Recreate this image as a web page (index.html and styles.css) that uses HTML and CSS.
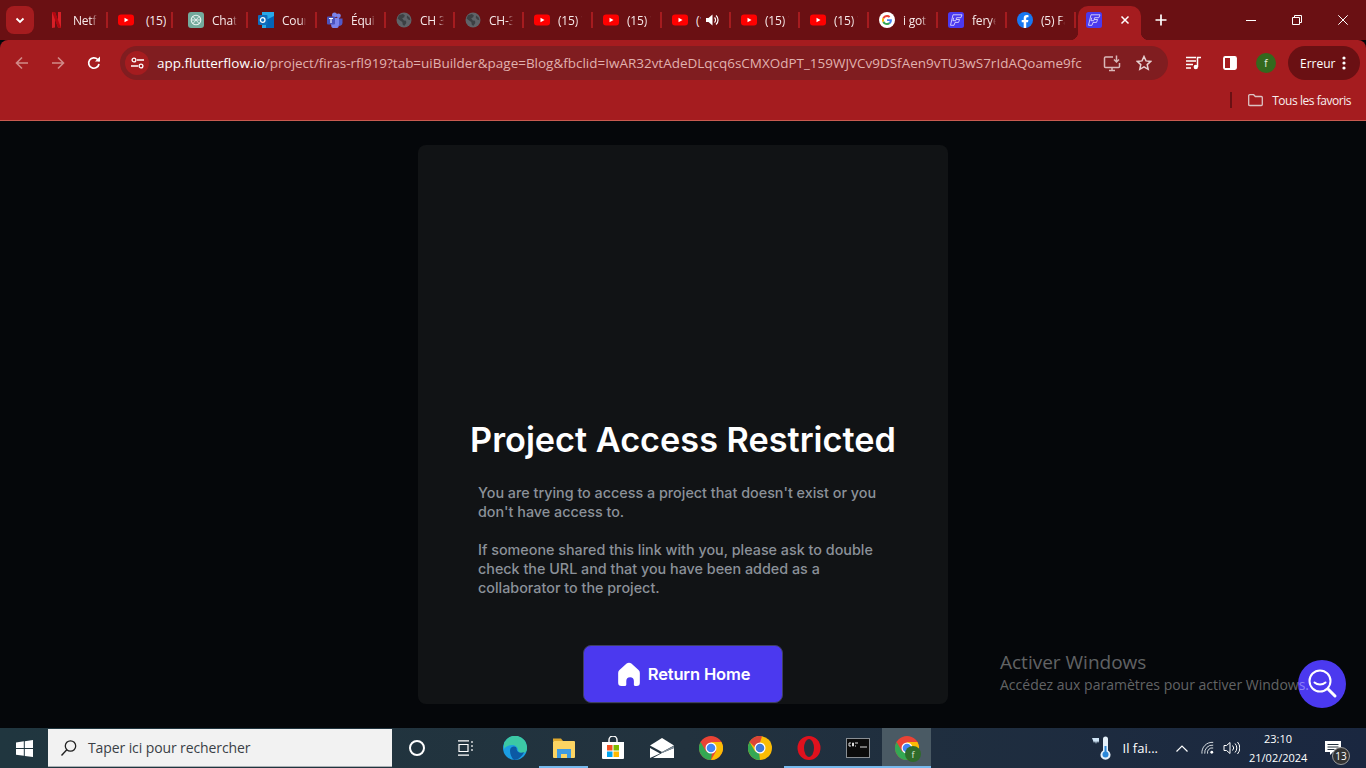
FILE: index.html
```html
<!DOCTYPE html>
<html lang="fr">
<head>
<meta charset="utf-8">
<title>FlutterFlow</title>
<link rel="stylesheet" href="styles.css">
</head>
<body>
<svg class="sprite" xmlns="http://www.w3.org/2000/svg">
  <symbol id="yt" viewBox="0 0 16 16"><rect x="0" y="2.500" width="16" height="11" rx="3" fill="#f00"/><path d="M6.500 5.700v4.600L10.500 8z" fill="#fff"/></symbol>
  <symbol id="globe" viewBox="0 0 16 16"><circle cx="8" cy="8" r="7.500" fill="#5f6368"/><path d="M3 3.200 6.800 2l2 1.200-.6 2-2 1 1.600 2.200 2.200.3.300 2.200-1.800 2.800-1.600-.6-.6-3.200L3.400 8 1.600 6.600zM11 3.400l2.600 2.200.8 2.600-2.200-.6-1.400-1.800z" fill="#3c4043"/></symbol>
  <symbol id="ff" viewBox="0 0 16 16"><rect width="16" height="16" rx="2.500" fill="#4b39ef"/><path d="M5 2.800h9l-1.100 2.900H8.600l-.6 1.800h3.600l-1.100 2.900H7l-1 2.900H2.500zM5.800 5.700l-.9 3h3.300" fill="none" stroke="#d9d5ff" stroke-width=".9"/></symbol>
</svg>

<header class="tabstrip">
  <button class="tabsearch"><svg width="12" height="12" viewBox="0 0 12 12"><path d="M2.500 4.500 6 8l3.500-3.500" fill="none" stroke="#fff" stroke-width="1.800"/></svg></button>
  <div class="tabs">
    <div class="tab"><svg class="fav" viewBox="0 0 16 16"><path d="M3 0h3l3 9V0h3v16l-3-.4L6 7v8.600l-3 .4z" fill="#d81f26"/><path d="M3 0h3l6 16-3-.4z" fill="#b20710"/></svg><span class="tab-t">Netflix</span></div>
    <div class="tab tab-wide"><svg class="fav"><use href="#yt"/></svg><span class="tab-t tab-t-far">(15) YouTube</span></div>
    <div class="tab tab-wide"><svg class="fav" viewBox="0 0 16 16"><rect width="16" height="16" rx="3" fill="#74aa9c"/><circle cx="8" cy="8" r="4.800" fill="none" stroke="#e8f3f0" stroke-width="1.100"/><path d="M5 4.500 11 11.500M11 4.500 5 11.500M3.500 8h9" stroke="#e8f3f0" stroke-width=".9"/></svg><span class="tab-t">ChatGPT</span></div>
    <div class="tab"><svg class="fav" viewBox="0 0 16 16"><rect x="4" y="0" width="12" height="16" fill="#28a8ea"/><path d="M8 8l8-4v12H8z" fill="#0364b8"/><rect x="0" y="3" width="9.500" height="10" rx="1" fill="#0f6cbd"/><circle cx="4.700" cy="8" r="2.300" fill="none" stroke="#fff" stroke-width="1.300"/></svg><span class="tab-t">Courrier</span></div>
    <div class="tab"><svg class="fav" viewBox="0 0 16 16"><circle cx="11.500" cy="3.800" r="2.300" fill="#7b83eb"/><circle cx="7.500" cy="3" r="2.500" fill="#7b83eb"/><path d="M10 6.500h5.500V11a3 3 0 0 1-5.500 1.500z" fill="#5059c9"/><path d="M4 6h8v6.500a4 4 0 0 1-8 0z" fill="#7b83eb"/><rect x="0" y="4.500" width="8" height="8" rx="1" fill="#4b53bc"/><path d="M2 6.500h4M4 6.500v4.500" stroke="#fff" stroke-width="1.100"/></svg><span class="tab-t">Équipes</span></div>
    <div class="tab"><svg class="fav"><use href="#globe"/></svg><span class="tab-t">CH 3</span></div>
    <div class="tab"><svg class="fav"><use href="#globe"/></svg><span class="tab-t">CH-3</span></div>
    <div class="tab"><svg class="fav"><use href="#yt"/></svg><span class="tab-t">(15) YouTube</span></div>
    <div class="tab"><svg class="fav"><use href="#yt"/></svg><span class="tab-t">(15) YouTube</span></div>
    <div class="tab tab-audio"><svg class="fav"><use href="#yt"/></svg><span class="tab-t tab-t-short">(15)</span><svg class="tab-sound" viewBox="0 0 14 14"><path d="M1 5h2.500L7.500 1.500v11L3.500 9H1z" fill="#fff"/><path d="M9.500 4.500a3.500 3.500 0 0 1 0 5M11 2.500a6 6 0 0 1 0 9" fill="none" stroke="#fff" stroke-width="1.200"/></svg></div>
    <div class="tab"><svg class="fav"><use href="#yt"/></svg><span class="tab-t">(15) YouTube</span></div>
    <div class="tab"><svg class="fav"><use href="#yt"/></svg><span class="tab-t">(15) YouTube</span></div>
    <div class="tab"><svg class="fav" viewBox="0 0 16 16"><circle cx="8" cy="8" r="8" fill="#fff"/><path d="M12.900 8.200c0-.4 0-.7-.1-1H8v1.900h2.800c-.1.600-.5 1.200-1 1.500l1.500 1.200c.9-.8 1.600-2.100 1.600-3.600z" fill="#4285f4"/><path d="M8 13c1.300 0 2.400-.4 3.300-1.200l-1.500-1.200c-.5.300-1.100.5-1.800.5-1.400 0-2.500-.9-2.900-2.100L3.500 10.200C4.300 11.900 6 13 8 13z" fill="#34a853"/><path d="M5.100 9c-.2-.6-.2-1.400 0-2L3.500 5.800c-.7 1.400-.7 3 0 4.400z" fill="#fbbc05"/><path d="M8 5c.7 0 1.400.3 1.900.8l1.400-1.400C10.400 3.500 9.300 3 8 3 6 3 4.300 4.100 3.500 5.800L5.100 7C5.500 5.900 6.600 5 8 5z" fill="#ea4335"/></svg><span class="tab-t">i got</span></div>
    <div class="tab"><svg class="fav"><use href="#ff"/></svg><span class="tab-t">feryel</span></div>
    <div class="tab"><svg class="fav" viewBox="0 0 16 16"><circle cx="8" cy="8" r="8" fill="#1877f2"/><path d="M11 10.300l.4-2.300H9.200V6.500c0-.6.300-1.200 1.300-1.200h1V3.300s-.9-.2-1.800-.2c-1.800 0-3 1.100-3 3.100V8h-2v2.300h2V16h2.500v-5.700z" fill="#fff"/></svg><span class="tab-t">(5) Facebook</span></div>
    <div class="tab-active">
      <svg class="fav"><use href="#ff"/></svg>
      <svg class="tab-close" viewBox="0 0 10 10"><path d="M1.500 1.500l7 7M8.500 1.500l-7 7" stroke="#fff" stroke-width="1.500"/></svg>
    </div>
  </div>
  <button class="newtab"><svg width="12" height="12" viewBox="0 0 12 12"><path d="M6 .5v11M.5 6h11" stroke="#fff" stroke-width="1.700"/></svg></button>
  <div class="winctl">
    <span class="winbtn"><svg width="10" height="10" viewBox="0 0 10 10"><path d="M0 5.500h10" stroke="#fff"/></svg></span>
    <span class="winbtn"><svg width="10" height="10" viewBox="0 0 10 10"><path d="M.5 2.500h7v7h-7zM2.500 2.500v-2h7v7h-2" fill="none" stroke="#fff"/></svg></span>
    <span class="winbtn"><svg width="10" height="10" viewBox="0 0 10 10"><path d="M.3.300l9.400 9.400M9.700.300.300 9.700" stroke="#fff"/></svg></span>
  </div>
</header>

<section class="toolbar">
  <div class="navrow">
    <span class="navbtn"><svg width="16" height="16" viewBox="0 0 16 16"><path d="M14 8H2.500M8 2.500 2.500 8 8 13.500" fill="none" stroke="#d18a88" stroke-width="1.600"/></svg></span>
    <span class="navbtn"><svg width="16" height="16" viewBox="0 0 16 16"><path d="M2 8h11.500M8 2.500 13.500 8 8 13.500" fill="none" stroke="#d18a88" stroke-width="1.600"/></svg></span>
    <span class="navbtn"><svg width="16" height="16" viewBox="0 0 16 16"><path d="M13 9a5.200 5.200 0 1 1-1.300-4.500L13.500 6" fill="none" stroke="#fff" stroke-width="1.700"/><path d="M14 1.500V6.500H9z" fill="#fff"/></svg></span>
    <div class="omnibox">
      <span class="tune"><svg width="13" height="12" viewBox="0 0 13 12"><circle cx="3" cy="3" r="1.900" fill="none" stroke="#fff" stroke-width="1.300"/><path d="M6 3h7M0 9h7" stroke="#fff" stroke-width="1.400"/><circle cx="10" cy="9" r="1.900" fill="none" stroke="#fff" stroke-width="1.300"/></svg></span>
      <span class="url"><span class="url-host">app.flutterflow.io</span>/project/firas-rfl919?tab=uiBuilder&amp;page=Blog&amp;fbclid=IwAR32vtAdeDLqcq6sCMXOdPT_159WJVCv9DSfAen9vTU3wS7rIdAQoame9fc</span>
      <span class="omni-ico omni-first"><svg width="18" height="18" viewBox="0 0 18 18"><path d="M10 3H2.500A1 1 0 0 0 1.500 4v8.500a1 1 0 0 0 1 1h13a1 1 0 0 0 1-1V9M6 16.500h6M9 14v2.500M13.500 1.500v6M11 5.500l2.500 2.500L16 5.500" fill="none" stroke="#d9b8b8" stroke-width="1.500"/></svg></span>
      <span class="omni-ico"><svg width="16" height="16" viewBox="0 0 16 16"><path d="M8 1.500l2 4.400 4.800.5-3.600 3.200 1 4.700L8 11.900l-4.200 2.400 1-4.700L1.200 6.400 6 5.900z" fill="none" stroke="#e6d0d0" stroke-width="1.500"/></svg></span>
    </div>
    <span class="tool-ico tool-first"><svg width="16" height="14" viewBox="0 0 16 14"><path d="M0 1.500h10M0 5h10M0 8.500h7M0 12h5" stroke="#fff" stroke-width="1.500"/><path d="M11.500 11V1.500H15" fill="none" stroke="#fff" stroke-width="1.500"/><circle cx="9.800" cy="11" r="2.200" fill="#fff"/></svg></span>
    <span class="tool-ico"><svg width="14" height="14" viewBox="0 0 14 14"><rect x=".7" y=".7" width="12.600" height="12.600" rx="1.500" fill="#fff" stroke="#fff" stroke-width="1.200"/><rect x="2" y="2" width="5" height="10" fill="#a51c1f"/></svg></span>
    <span class="avatar">f</span>
    <div class="errpill"><span class="errtext">Erreur</span><svg width="4" height="14" viewBox="0 0 4 14"><circle cx="2" cy="2" r="1.600" fill="#fff"/><circle cx="2" cy="7" r="1.600" fill="#fff"/><circle cx="2" cy="12" r="1.600" fill="#fff"/></svg></div>
  </div>
  <div class="bookrow">
    <span class="booksep"></span>
    <svg width="16" height="13" viewBox="0 0 16 13"><path d="M.7 11.500V1.700a1 1 0 0 1 1-1h4l1.600 1.800h6a1 1 0 0 1 1 1v7a1 1 0 0 1-1 1H1.700a1 1 0 0 1-1-1z" fill="none" stroke="#dcc2c2" stroke-width="1.300"/></svg>
    <span class="booktext">Tous les favoris</span>
  </div>
</section>

<main class="stage">
  <article class="card">
    <h1 class="card-title">Project Access Restricted</h1>
    <p class="card-text">You are trying to access a project that doesn't exist or you<br>don't have access to.</p>
    <p class="card-text">If someone shared this link with you, please ask to double<br>check the URL and that you have been added as a<br>collaborator to the project.</p>
    <button class="homebtn"><svg width="26" height="26" viewBox="0 0 24 24"><path d="M12 1.500c.8 0 1.600.3 2.200.9l6.600 6c.8.7 1.200 1.600 1.200 2.600V20a3 3 0 0 1-3 3h-1.500a1 1 0 0 1-1-1v-3.500a3.500 3.500 0 0 0-7 0V22a1 1 0 0 1-1 1H5a3 3 0 0 1-3-3v-9c0-1 .4-1.900 1.200-2.600l6.600-6c.6-.6 1.400-.9 2.200-.9z" fill="#fff"/></svg><span>Return Home</span></button>
  </article>
  <button class="fab"><svg width="32" height="32" viewBox="0 0 32 32"><circle cx="14" cy="13" r="10.500" fill="none" stroke="#fff" stroke-width="2"/><path d="M8.500 14.500c3 2.600 8 2.600 11 0" fill="none" stroke="#fff" stroke-width="2" stroke-linecap="round"/><path d="M22 21l7 7" stroke="#fff" stroke-width="3" stroke-linecap="round"/></svg></button>
  <div class="watermark"><div class="wm-big">Activer Windows</div><div class="wm-small">Accédez aux paramètres pour activer Windows.</div></div>
</main>

<footer class="taskbar">
  <span class="startbtn"><svg width="17" height="17" viewBox="0 0 17 17"><path d="M0 2.400 7.800 1.300v6.800H0zM8.800 1.200 17 0v8.100H8.800zM0 9h7.800v6.800L0 14.700zM8.800 9H17v8l-8.200-1.100z" fill="#fff"/></svg></span>
  <div class="searchbox"><svg width="18" height="18" viewBox="0 0 18 18"><circle cx="10.500" cy="7" r="5.200" fill="none" stroke="#222" stroke-width="1.300"/><path d="M6.800 10.800 1.500 16.500" stroke="#222" stroke-width="1.400"/></svg><span>Taper ici pour rechercher</span></div>
  <span class="tb"><svg width="16" height="16" viewBox="0 0 16 16"><circle cx="8" cy="8" r="7" fill="none" stroke="#fff" stroke-width="2"/></svg></span>
  <span class="tb"><svg width="16" height="16" viewBox="0 0 16 16"><path d="M0 .8h11M0 15.200h11M1 4.500h9v7H1zM14 1v2M14 5v2M14 9v2" fill="none" stroke="#fff" stroke-width="1.200"/></svg></span>
  <span class="tb"><svg width="24" height="24" viewBox="0 0 24 24"><circle cx="12" cy="12" r="12" fill="#1b9de2"/><path d="M1 7A12 12 0 0 1 24 12.500c0 3.500-3 5-5.500 4.500-2-.4-3.500-1.500-3.500-3 0-3-3-5-6-5-3 0-6 1-8 4z" fill="#3cc8a4"/><path d="M7 14.500c0-2.500 2-4 4-4 1.500 0 2.500.8 2.700 2-.5 3 3.300 5.500 7.300 3.500-2 4.500-6 8-10 8-2.500-2-4-6-4-9.500z" fill="#0c59a4"/></svg></span>
  <span class="tb tb-open"><svg width="24" height="22" viewBox="0 0 24 22"><path d="M1 4V1.500h8L11 4z" fill="#e0a92e"/><rect x="1" y="4" width="22" height="17" rx="1" fill="#fcd462"/><path d="M5 12h14v9h-4v-4H9v4H5z" fill="#3f9ae0"/></svg></span>
  <span class="tb"><svg width="24" height="24" viewBox="0 0 24 24"><path d="M8 6V4a4 4 0 0 1 8 0v2" fill="none" stroke="#fff" stroke-width="1.400"/><path d="M1 6h22v16a1 1 0 0 1-1 1H2a1 1 0 0 1-1-1z" fill="#fff"/><rect x="6" y="9" width="5.500" height="5.500" fill="#f25022"/><rect x="12.500" y="9" width="5.500" height="5.500" fill="#7fba00"/><rect x="6" y="15.500" width="5.500" height="5.500" fill="#00a4ef"/><rect x="12.500" y="15.500" width="5.500" height="5.500" fill="#ffb900"/></svg></span>
  <span class="tb"><svg width="24" height="20" viewBox="0 0 24 20"><path d="M12 0 24 7.500 12 14 0 7.500z" fill="#fff"/><path d="M0 10l10 5.500L0 20zM24 10v10H3l9-5z" fill="#fff"/><path d="M12 14 24 8v2l-12 5-1-.5z" fill="#8795a0"/></svg></span>
  <span class="tb"><svg width="24" height="24" viewBox="0 0 24 24"><circle cx="12" cy="12" r="12" fill="#ea4335"/><path d="M12 24A12 12 0 0 1 1.600 6l5.500 9.500 6 .5z" fill="#34a853"/><path d="M12 6h10.400A12 12 0 0 1 12 24l5.200-9z" fill="#fbbc05"/><circle cx="12" cy="12" r="5.500" fill="#fff"/><circle cx="12" cy="12" r="4.300" fill="#4285f4"/></svg></span>
  <span class="tb"><svg width="24" height="24" viewBox="0 0 24 24"><circle cx="12" cy="12" r="12" fill="#fbbc05"/><path d="M12 24A12 12 0 0 1 1.600 6l5.500 9.500 4 1z" fill="#34a853"/><path d="M1.600 6A12 12 0 0 1 14 .2L12 6.500 6.800 11z" fill="#db4437"/><circle cx="12" cy="12" r="5.500" fill="#fff"/><circle cx="12" cy="12" r="4.300" fill="#3f78d8"/></svg></span>
  <span class="tb tb-open"><svg width="24" height="24" viewBox="0 0 24 24"><ellipse cx="12" cy="12" rx="11.500" ry="12" fill="#e0111d"/><ellipse cx="12" cy="12" rx="5" ry="9" fill="#26323e"/></svg></span>
  <span class="tb tb-open"><svg width="24" height="20" viewBox="0 0 24 20"><rect x=".5" y=".5" width="23" height="19" fill="#0b0b0b" stroke="#8a8f94"/><path d="M3 5h2M3 8h2M3 5v3M6.500 5h1v3h-1zM9 5h3M9 8h1M14 9h7" fill="none" stroke="#ddd" stroke-width="1"/></svg></span>
  <span class="tb tb-active"><svg width="24" height="24" viewBox="0 0 24 24"><circle cx="12" cy="12" r="12" fill="#ea4335"/><path d="M12 24A12 12 0 0 1 1.600 6l5.500 9.500 6 .5z" fill="#34a853"/><path d="M12 6h10.400A12 12 0 0 1 12 24l5.200-9z" fill="#fbbc05"/><circle cx="12" cy="12" r="5.500" fill="#fff"/><circle cx="12" cy="12" r="4.300" fill="#4285f4"/></svg><span class="tb-badge">f</span></span>
  <div class="tray">
    <span class="tray-temp"><svg width="20" height="26" viewBox="0 0 20 26"><path d="M0 3h7v3l-1 2-1-2-1 3-1-3-1 2z" fill="#cfe4f5"/><path d="M11 4a2.500 2.500 0 0 1 5 0v11.500a5 5 0 1 1-5 0z" fill="#e5f1fa"/><rect x="12.500" y="11" width="2" height="8" fill="#2b88d8"/><circle cx="13.500" cy="19.500" r="3" fill="#2b88d8"/></svg><span>Il fai...</span></span>
    <svg class="tray-chev" width="12" height="7" viewBox="0 0 12 7"><path d="M.5 6.500l5.500-5.500 5.500 5.500" fill="none" stroke="#fff" stroke-width="1.200"/></svg>
    <svg class="tray-net" width="15" height="14" viewBox="0 0 16 14"><path d="M1 13a11 11 0 0 1 12-12M4 13a8 8 0 0 1 9-9M7 13a5 5 0 0 1 6-6" fill="none" stroke="#dfe4e8" stroke-width="1"/><circle cx="11.500" cy="11.500" r="1.500" fill="#fff"/></svg>
    <svg class="tray-vol" width="17" height="14" viewBox="0 0 17 14"><path d="M1 4.500h2.500L7 1.500v11L3.500 9.500H1z" fill="none" stroke="#fff"/><path d="M9.500 4.500a3.500 3.500 0 0 1 0 5M12 2.500a6.500 6.500 0 0 1 0 9M14.500 1a9 9 0 0 1 0 12" fill="none" stroke="#fff"/></svg>
    <div class="clock"><div>23:10</div><div>21/02/2024</div></div>
    <span class="notif"><svg width="16" height="15" viewBox="0 0 16 15"><path d="M0 0h16v11H8l-3 3v-3H0z" fill="#fff"/><path d="M2.500 3.500h11M2.500 6h11M2.500 8.500h7" stroke="#22303d"/></svg><span class="notif-badge">13</span></span>
  </div>
</footer>
</body>
</html>
```

FILE: styles.css
```css
* { box-sizing: border-box; }
html, body { margin: 0; padding: 0; }
body {
  width: 1366px; height: 768px; overflow: hidden;
  display: flex; flex-direction: column;
  background: #05070a;
  font-family: "Open Sans", "Liberation Sans", sans-serif;
  color: #fff;
}
button { border: 0; padding: 0; font: inherit; color: inherit; background: none; }
svg { display: block; flex: none; }
.sprite { display: none; }

/* tab strip */
.tabstrip { height: 40px; flex: none; display: flex; align-items: flex-end; background: #6a1013; padding-left: 6px; }
.tabsearch { width: 28px; height: 28px; margin-bottom: 6px; border-radius: 8px; background: #a51c1f; display: flex; align-items: center; justify-content: center; }
.tabs { display: flex; align-items: flex-end; margin-left: 5px; height: 34px; }
.tab { width: 69px; height: 34px; display: flex; align-items: center; padding: 0 0 6px 10px; font-size: 12px; }
.tab-wide { width: 70px; }
.tab::after { content: ""; width: 2px; height: 16px; background: #a51c1f; flex: none; margin-left: 9px; }
.fav { width: 16px; height: 16px; margin-right: 8px; }
.tab-t { flex: 1; min-width: 0; overflow: hidden; white-space: nowrap; letter-spacing: -.2px; color: #f6e9e9; -webkit-mask-image: linear-gradient(90deg, #000 78%, transparent); mask-image: linear-gradient(90deg, #000 78%, transparent); }
.tab-t-far { padding-left: 4px; flex: none; width: 24px; -webkit-mask-image: none; mask-image: none; }
.tab-t-short { flex: none; width: 5px; -webkit-mask-image: none; mask-image: none; }
.tab-sound { width: 14px; height: 14px; margin-left: 4px; }
.tab-audio::after { margin-left: auto; }
.tab-wide:has(.tab-t-far)::after { margin-left: 5px; }
.tab-active { width: 63px; height: 34px; margin-left: 2px; background: #a51c1f; border-radius: 10px 10px 0 0; display: flex; align-items: center; padding: 0 11px 6px 8px; justify-content: space-between; position: relative; }
.tab-active .fav { margin: 0; }
.tab-close { width: 10px; height: 10px; }
.tab-active::before, .tab-active::after { content: ""; position: absolute; bottom: 0; width: 8px; height: 8px; }
.tab-active::before { left: -8px; background: radial-gradient(circle at 0 0, transparent 8px, #a51c1f 8.500px); }
.tab-active::after { right: -8px; background: radial-gradient(circle at 100% 0, transparent 8px, #a51c1f 8.500px); }
.newtab { width: 12px; height: 12px; margin: 0 0 14px 14px; }
.winctl { margin-left: auto; display: flex; height: 40px; }
.winbtn { width: 46px; height: 40px; display: flex; align-items: center; justify-content: center; }

/* toolbar */
.toolbar { height: 81px; flex: none; background: #a51c1f; border-bottom: 1px solid #c85a50; border-radius: 8px 8px 0 0; }
.navrow { height: 46px; display: flex; align-items: center; padding: 6px 6px 6px 4px; }
.navbtn { width: 36px; height: 34px; display: flex; align-items: center; justify-content: center; }
.omnibox { width: 1048px; height: 34px; margin-left: 8px; border-radius: 17px; background: #801d20; display: flex; align-items: center; padding-left: 5px; flex: none; }
.tune { width: 24px; height: 24px; border-radius: 50%; background: #a51c1f; display: flex; align-items: center; justify-content: center; flex: none; }
.url { margin-left: 8px; width: 926px; flex: none; overflow: hidden; white-space: nowrap; font-size: 13.480px; color: #e0b1af; }
.url-host { color: #fff; }
.omni-ico { width: 32px; display: flex; justify-content: center; flex: none; }
.omni-first { margin-left: 13px; }
.tool-ico { width: 36px; display: flex; justify-content: center; flex: none; }
.tool-first { margin-left: 8px; }
.avatar { width: 20px; height: 20px; margin-left: 8px; border-radius: 50%; background: #33691e; color: #e6efe0; font-size: 10px; display: flex; align-items: center; justify-content: center; flex: none; }
.errpill { width: 72px; height: 34px; margin-left: 12px; border-radius: 17px; background: #6a1013; display: flex; align-items: center; justify-content: space-between; padding: 0 14px 0 12px; flex: none; font-size: 12px; }
.bookrow { height: 28px; display: flex; align-items: center; justify-content: flex-end; padding: 0 15px 0 0; font-size: 12px; }
.booksep { width: 2px; height: 16px; background: #6a1013; margin-right: 16px; }
.booktext { margin-left: 8px; letter-spacing: -.46px; color: #f8eeee; }

/* main */
.stage { flex: 1; display: flex; justify-content: center; align-items: flex-start; padding-top: 24px; position: relative; }
.card { width: 530px; height: 559px; background: #111315; border-radius: 8px; display: flex; flex-direction: column; justify-content: flex-end; align-items: stretch; padding-bottom: 1px; font-family: "Inter", "Liberation Sans", sans-serif; }
.card-title { margin: 0 0 22px; font-size: 34.250px; line-height: 42px; font-weight: 600; text-align: center; }
.card-text { margin: 0 0 19px 60px; font-size: 14.350px; line-height: 19px; font-weight: 500; color: #8b9199; white-space: nowrap; }
.homebtn { align-self: center; margin-top: 29px; width: 200px; height: 58px; border: 1px solid #3f3f63; border-radius: 8px; background: #4b39ef; display: flex; align-items: center; justify-content: center; gap: 6px; font-size: 16.500px; font-weight: 600; letter-spacing: -.15px; color: #fff; }
.watermark { position: absolute; left: 1000px; top: 529px; color: rgba(255, 255, 255, .38); white-space: nowrap; }
.wm-big { font-size: 19px; line-height: 24px; }
.wm-small { font-size: 14px; line-height: 22px; }
.fab { position: absolute; left: 1298px; top: 539px; width: 48px; height: 48px; border-radius: 50%; background: #4b39ef; display: flex; align-items: center; justify-content: center; }

/* taskbar */
.taskbar { height: 40px; flex: none; display: flex; align-items: stretch; background: linear-gradient(90deg, #20363f, #22323e 50%, #1a2740); }
.startbtn { width: 48px; display: flex; align-items: center; justify-content: center; }
.searchbox { width: 344px; margin: 1px 0; background: #f2f2f2; color: #3a3f46; display: flex; align-items: center; gap: 10px; padding-left: 12px; font-size: 14px; letter-spacing: -.1px; border-bottom: 1px solid #aab0b4; }
.tb { width: 49px; display: flex; align-items: center; justify-content: center; position: relative; border-bottom: 2px solid transparent; padding-top: 2px; }
.tb-open { border-bottom-color: #76b9ed; }
.tb-active { border-bottom-color: #76b9ed; background: #4a5a64; }
.tb-badge { position: absolute; left: 23px; top: 18px; width: 16px; height: 16px; border-radius: 50%; background: #2f6b2a; font-size: 9px; display: flex; align-items: center; justify-content: center; color: #dfe8d8; }
.tray { margin-left: auto; display: flex; align-items: center; font-size: 11px; padding-right: 25px; }
.tray-temp { display: flex; align-items: center; gap: 11px; font-size: 13px; }
.tray-chev { margin-left: 18px; }
.tray-net { margin-left: 13px; }
.tray-vol { margin-left: 7px; }
.clock { margin-left: 9px; width: 58px; text-align: center; line-height: 19px; white-space: nowrap; }
.notif { position: relative; margin-left: 18px; width: 16px; }
.notif-badge { position: absolute; left: 7px; top: 6px; width: 18px; height: 18px; border-radius: 50%; background: #333; border: 1px solid #9a9a9a; font-size: 10px; display: flex; align-items: center; justify-content: center; }
```
